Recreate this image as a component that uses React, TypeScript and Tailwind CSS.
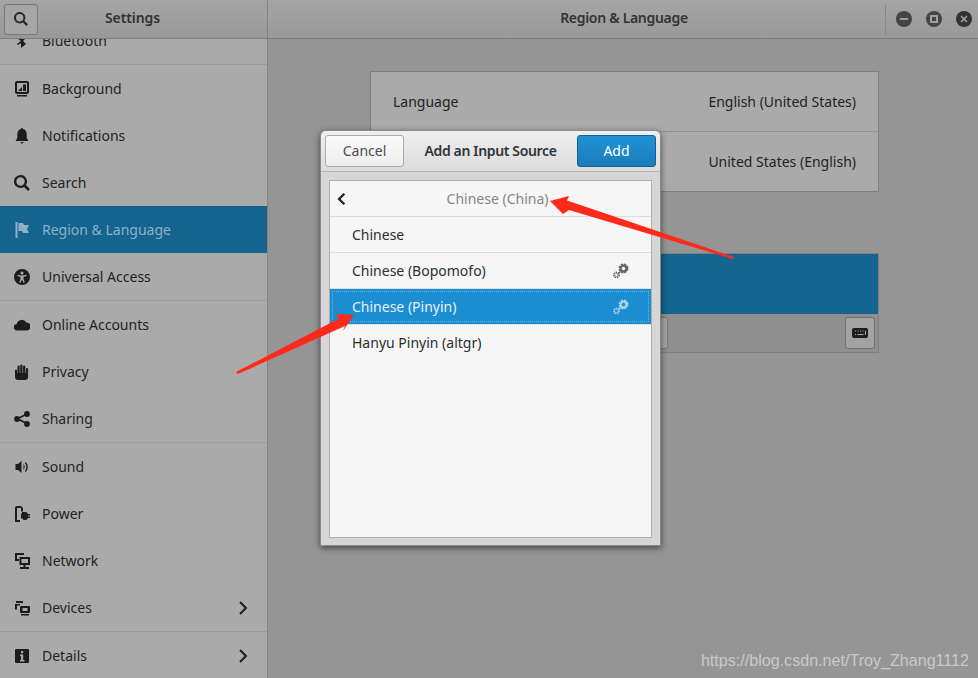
import React from "react";

const ic = "w-4 h-4 fill-[#1c1c1c] shrink-0";
const Svg = ({ children }: { children: React.ReactNode }) => (
  <svg viewBox="0 0 16 16" className={ic}>{children}</svg>
);

const icons: Record<string, React.ReactNode> = {
  Bluetooth: <Svg><path d="M7 1l5 4-3 3 3 3-5 4V10l-3 2-1-1 4-3-4-3 1-1 3 2z" /></Svg>,
  Background: <Svg><path fillRule="evenodd" d="M3 0h10a2 2 0 0 1 2 2v9a2 2 0 0 1-2 2H3a2 2 0 0 1-2-2V2a2 2 0 0 1 2-2zm0 2v9h10V2zM3 14h10v1.500H3z" /><path d="M4 10l4-4v4zM9 3.500h3V10H9z" /></Svg>,
  Notifications: <Svg><path d="M8 0a1 1 0 0 1 1 1c2.500.5 3.700 2.500 3.700 5.500v3.500L14.500 13h-13l1.800-3V6.500C3.300 3.500 4.500 1.500 7 1a1 1 0 0 1 1-1zM6.500 14h3a1.500 1.500 0 0 1-3 0z" /></Svg>,
  Search: <Svg><path fillRule="evenodd" d="M6.500 0a6.500 6.500 0 0 1 5.400 10.100l4 4-1.800 1.800-4-4A6.500 6.500 0 1 1 6.500 0zm0 2.300a4.200 4.200 0 1 0 0 8.400 4.200 4.200 0 0 0 0-8.400z" /></Svg>,
  Region: <Svg><path d="M1.500 0h2v16h-2zM4.500 1H9l1 2h5l-2 4 2 4H9l-1-2H4.500z" /></Svg>,
  Universal: <svg viewBox="0 0 16 16" className="w-4 h-4 shrink-0 fill-[#1c1c1c]"><path fillRule="evenodd" d="M8 0a8 8 0 1 1 0 16A8 8 0 0 1 8 0zm0 2.500a1.500 1.500 0 1 0 0 3 1.500 1.500 0 0 0 0-3zM3.500 5.800v1.300l3 .9v2l-1.300 3.300 1.200.4L8 10.500l1.600 3.200 1.200-.4L9.500 10V8l3-.9V5.800L9 6.500H7z" /></svg>,
  Online: <Svg><path d="M3.300 13.500a3.300 3.300 0 0 1-.6-6.600A5.200 5.200 0 0 1 12.300 5.500a4 4 0 0 1 .4 8z" /></Svg>,
  Privacy: <Svg><path d="M1 6.500a1 1 0 0 1 2 0V9h.5V2.500a1.100 1.100 0 0 1 2.200 0V9h.6V1.500a1.100 1.100 0 0 1 2.200 0V9h.6V2.500a1.100 1.100 0 0 1 2.200 0V9h.6V5a1.100 1.100 0 0 1 2.200 0v8a3 3 0 0 1-3 3H4a3 3 0 0 1-3-3z" /></Svg>,
  Sharing: <Svg><circle cx="13" cy="3" r="2.900" /><circle cx="13" cy="13" r="2.900" /><circle cx="3" cy="8" r="2.900" /><path d="M3 7l10-5 .8 1.600-10 5zM3.800 7l10 5-.8 1.600-10-5z" /></Svg>,
  Sound: <Svg><path d="M7.500 2v12L4 11H1.500V5H4zM9.500 5c1.500 1 1.500 5 0 6zM11.500 3c3 2 3 8 0 10l-.7-1c2-1.800 2-6.200 0-8z" /></Svg>,
  Power: <Svg><path fillRule="evenodd" d="M3 0h4l2 2v3.500H7V2H3v12h3v2H1V2a2 2 0 0 1 2-2z" /><path d="M8 6h3.500a2.500 2.500 0 0 1 2.300 2H16v1.500h-2v1h2V12h-2.200A2.500 2.500 0 0 1 11.500 14H9.500l-1-1.500H7V7.500h1z" /></Svg>,
  Network: <Svg><path fillRule="evenodd" d="M1 0h9v2H3v4h2v2H1zM5.500 4H16v8h-4.500v2H15v2H6v-2h3.500v-2h-4zm2 2v4H14V6z" /></Svg>,
  Devices: <Svg><path d="M2 1h7v2H2zM1 4h5v1.500H3v4H1z" /><path fillRule="evenodd" d="M7 6h8a1 1 0 0 1 1 1v5a1 1 0 0 1-1 1H7a1 1 0 0 1-1-1V7a1 1 0 0 1 1-1zm1.500 2v3h5V8zM7 14h8v1.500H7z" /></Svg>,
  Details: <Svg><path fillRule="evenodd" d="M2 1h12a1 1 0 0 1 1 1v12a1 1 0 0 1-1 1H2a1 1 0 0 1-1-1V2a1 1 0 0 1 1-1zm5 2v2.200h2.200V3zM6 6.500V8h1v4H6v1.500h4.500V12H9.200V6.500z" /></Svg>,
};

const Chevron = () => (
  <svg viewBox="0 0 16 16" className="w-4 h-4 fill-none stroke-[#1c1c1c] stroke-2 shrink-0"><path d="M5 2l6 6-6 6" /></svg>
);

const Row = ({ id, label, active, chevron }: { id: string; label: string; active?: boolean; chevron?: boolean }) => (
  <div className={`h-[47px] flex items-center pl-[14px] pr-[16px] gap-3 ${active ? "bg-[#15638f] text-[#8eb1c6]" : "text-[#232323]"}`}>
    <span className={active ? "[&_svg]:fill-[#8eb1c6]" : ""}>{icons[id]}</span>
    <span className="flex-1">{label}</span>
    {chevron && <Chevron />}
  </div>
);

const Sep = () => <div className="h-px bg-[#9b9b9b]" />;

const Gear = ({ light }: { light?: boolean }) => (
  <svg viewBox="0 0 18 18" className={`w-[18px] h-[18px] shrink-0 ${light ? "stroke-[#a9d2ea]" : "stroke-[#666666]"}`} fill="none">
    <circle cx="11.500" cy="6.500" r="3.300" strokeWidth="3.400" strokeDasharray="1.800 .8" />
    <circle cx="11.500" cy="6.500" r="3" strokeWidth="1.800" />
    <circle cx="4.500" cy="13" r="2.300" strokeWidth="2.200" strokeDasharray="1.200 .6" />
    <path d="M8.500 9.500L6.500 11.500" strokeWidth="1.200" />
  </svg>
);

const DRow = ({ label, gear, active, last }: { label: string; gear?: boolean; active?: boolean; last?: boolean }) => (
  <div className={`h-9 flex items-center pl-[22px] pr-[21px] border-b ${active ? "bg-[#1b8dd1] text-[#e6f2f9] relative border-[#dcdcdc]" : "text-[#2b2f30]"} ${last ? "border-transparent" : "border-[#dcdcdc]"}`}>
    {active && <div className="absolute inset-[2px] border border-dotted border-[#6db6e3]" />}
    <span className="flex-1">{label}</span>
    {gear && <Gear light={active} />}
  </div>
);

export default function App() {
  return (
    <div className="w-[978px] h-[678px] relative overflow-hidden flex flex-col bg-[#959595] text-[14px] font-['Noto_Sans','Liberation_Sans',sans-serif]">
      <header className="h-[39px] shrink-0 flex border-b border-[#7f7f7f] bg-gradient-to-b from-[#a5a5a5] to-[#999999] relative z-10">
        <div className="w-[268px] shrink-0 border-r border-[#838383] flex items-center relative pl-1">
          <button className="w-[34px] h-[31px] flex items-center justify-center rounded-[3px] border border-[#777] bg-[#a6a6a6]">
            <span className="block scale-[0.88] [&_svg]:fill-[#2a2a2a]">{icons.Search}</span>
          </button>
          <span className="absolute left-[105px] font-semibold tracking-[-0.1px] text-[#333] pb-[4px]">Settings</span>
        </div>
        <div className="flex-1 flex items-center relative">
          <span className="w-[617px] pl-[95px] text-center font-semibold tracking-[-0.3px] text-[#333] pb-[4px]">Region &amp; Language</span>
          <div className="h-[31px] w-px bg-[#8a8a8a]" />
          <div className="flex items-center gap-[14px] pl-[10px]">
            <span className="w-4 h-4 rounded-full bg-[#454545] flex items-center justify-center"><span className="w-2 h-[2px] bg-[#a0a0a0]" /></span>
            <span className="w-4 h-4 rounded-full bg-[#454545] flex items-center justify-center"><span className="w-2 h-2 border-2 border-[#a0a0a0]" /></span>
            <span className="w-4 h-4 rounded-full bg-[#333] flex items-center justify-center">
              <svg viewBox="0 0 8 8" className="w-2 h-2 stroke-[#a8a8a8] stroke-[1.500]"><path d="M1 1l6 6M7 1L1 7" /></svg>
            </span>
          </div>
        </div>
      </header>

      <div className="flex-1 flex min-h-0">
        <aside className="w-[268px] shrink-0 bg-[#aaaaaa] border-r border-[#838383] overflow-hidden">
          <div className="-mt-[22px]">
            <Row id="Bluetooth" label="Bluetooth" />
            <Sep />
            <Row id="Background" label="Background" />
            <Row id="Notifications" label="Notifications" />
            <Row id="Search" label="Search" />
            <Row id="Region" label="Region & Language" active />
            <Row id="Universal" label="Universal Access" />
            <Sep />
            <Row id="Online" label="Online Accounts" />
            <Row id="Privacy" label="Privacy" />
            <Row id="Sharing" label="Sharing" />
            <Sep />
            <Row id="Sound" label="Sound" />
            <Row id="Power" label="Power" />
            <Row id="Network" label="Network" />
            <Row id="Devices" label="Devices" chevron />
            <Sep />
            <Row id="Details" label="Details" chevron />
          </div>
        </aside>
        <main className="flex-1 pl-[102px] pt-8 pr-[99px] text-[#232323]">
          <div className="border border-[#7e7e7e] bg-[#aaaaaa]">
            <div className="h-[60px] flex items-center justify-between px-[22px] border-b border-[#939393]">
              <span>Language</span><span>English (United States)</span>
            </div>
            <div className="h-[59px] flex items-center justify-end px-[22px]">
              <span>United States (English)</span>
            </div>
          </div>
          <div className="mt-[61px] border border-[#7e7e7e] bg-[#8f8f8f]">
            <div className="h-[60px] bg-[#15638f]" />
            <div className="h-[38px] flex items-center justify-end px-[3px] relative">
              <div className="absolute left-[260px] top-[3px] w-[37px] h-[32px] bg-[#a3a3a3] border border-[#7a7a7a] rounded-[3px]" />
              <button className="w-[30px] h-[32px] bg-[#a3a3a3] border border-[#6f6f6f] rounded-[3px] flex items-center justify-center">
                <svg viewBox="0 0 16 10" className="w-4 h-[10px]"><rect width="16" height="10" rx="2" fill="#1c1c1c" /><path d="M3 3h1M5.500 3h1M8 3h1M10.500 3h1M13 3h.5v4M3 6.500h1M5.500 6.500h6" stroke="#a8a8a8" strokeWidth="1" fill="none" /></svg>
              </button>
            </div>
          </div>
        </main>
      </div>

      {/* Dialog */}
      <div className="absolute left-[320px] top-[130px] w-[341px] h-[416px] z-20 rounded-t-[6px] border border-[#8a8a8a] bg-[#d6d6d6] shadow-[0_2px_6px_rgba(0,0,0,0.55)] flex flex-col">
        <div className="h-[41px] shrink-0 rounded-t-[5px] border-b border-[#b5b5b5] bg-gradient-to-b from-[#efefef] to-[#dcdcdc] flex items-center justify-between px-[4px] pb-px">
          <button className="w-[79px] h-[32px] rounded-[3px] border border-[#ababab] bg-gradient-to-b from-[#fafafa] to-[#ededed] text-[#4c4c4c]">Cancel</button>
          <span className="font-semibold tracking-[-0.35px] text-[#2e3436]">Add an Input Source</span>
          <button className="w-[79px] h-[32px] rounded-[3px] border border-[#155f97] bg-gradient-to-b from-[#1f92d6] to-[#1a7db8] text-white">Add</button>
        </div>
        <div className="mx-2 mt-2 h-[358px] border border-[#b0b0b0] bg-[#f6f6f6]">
          <div className="h-9 flex items-center relative border-b border-[#dcdcdc] text-[#868686] pl-[5px]">
            <svg viewBox="0 0 12 12" className="w-[14px] h-[14px] fill-none stroke-[#222] stroke-2"><path d="M8 1.500L3.500 6 8 10.500" /></svg>
            <span className="absolute inset-x-0 text-center pl-[14px]">Chinese (China)</span>
          </div>
          <DRow label="Chinese" />
          <DRow label="Chinese (Bopomofo)" gear />
          <DRow label="Chinese (Pinyin)" gear active />
          <DRow label="Hanyu Pinyin (altgr)" last />
        </div>
      </div>

      {/* Annotation arrows */}
      <svg viewBox="0 0 978 678" className="absolute inset-0 w-[978px] h-[678px] z-30 pointer-events-none">
        <polygon fill="#ff2a1a" points="550,201 569,196 567,200.500 734,257 733,259 569,210 563,214" />
        <polygon fill="#ff2a1a" points="354,315 336,314 339,318.500 236,372 238,374 345,326 343,331" />
      </svg>

      <div className="absolute right-[9px] top-[648px] z-30 text-[16.1px] text-[#c9c9c9] font-['Liberation_Sans',sans-serif]">https://blog.csdn.net/Troy_Zhang1112</div>
    </div>
  );
}
